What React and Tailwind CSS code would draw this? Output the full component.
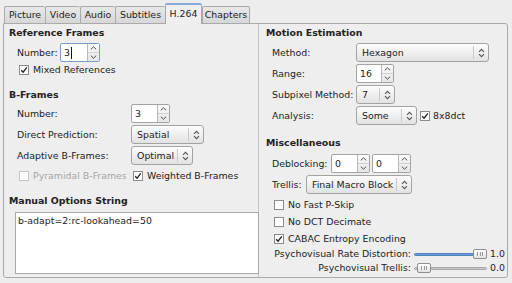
import React from "react";

const UpArrow = () => (
  <svg width="7" height="4" viewBox="0 0 7 4"><path d="M0.8 3.4L3.5 0.8L6.2 3.4" stroke="#4a4a4a" fill="none" strokeWidth="1" /></svg>
);
const DownArrow = () => (
  <svg width="7" height="4" viewBox="0 0 7 4"><path d="M0.8 0.6L3.5 3.2L6.2 0.6" stroke="#4a4a4a" fill="none" strokeWidth="1" /></svg>
);
const UpDown = () => (
  <svg width="7" height="10" viewBox="0 0 7 10">
    <path d="M1 3.8L3.5 1.3L6 3.8" stroke="#555" fill="none" strokeWidth="1.1" />
    <path d="M1 6.2L3.5 8.7L6 6.2" stroke="#555" fill="none" strokeWidth="1.1" />
  </svg>
);

function Spin({ value, className, focus, cursor }) {
  return (
    <div className={"flex h-[19px] rounded-[2px] border bg-white " + (focus ? "border-[#7d9dc9] " : "border-[#a3a3a3] ") + className}>
      <div className="flex flex-1 items-center pl-[3px]">
        <span>{value}</span>
        {cursor && <span className="ml-px h-[12px] w-px bg-[#111]" />}
      </div>
      <div className="flex w-[12px] flex-col border-l border-[#b8b8b8] bg-gradient-to-b from-[#fafafa] to-[#e6e6e6]">
        <div className="flex flex-1 items-center justify-center border-b border-[#d0d0d0]"><UpArrow /></div>
        <div className="flex flex-1 items-center justify-center"><DownArrow /></div>
      </div>
    </div>
  );
}

function Combo({ value, className }) {
  return (
    <div className={"flex h-[19px] items-center rounded-[3px] border border-[#a3a3a3] bg-gradient-to-b from-[#fdfdfd] to-[#e2e2e2] " + className}>
      <span className="flex-1 whitespace-nowrap pl-[5px]">{value}</span>
      <span className="h-[13px] w-px bg-[#c8c8c8]" />
      <span className="flex w-[14px] items-center justify-center"><UpDown /></span>
    </div>
  );
}

function Check({ checked, disabled }) {
  return (
    <span className={"flex h-[10px] w-[10px] shrink-0 items-center justify-center border bg-white " + (disabled ? "border-[#c6c6c6]" : "border-[#8c8c8c]")}>
      {checked && (
        <svg width="8" height="8" viewBox="0 0 8 8"><path d="M1.2 4.2L3.1 6.2L6.8 1.4" stroke="#222" fill="none" strokeWidth="1.3" /></svg>
      )}
    </span>
  );
}

function Slider({ filled, thumbClass }) {
  return (
    <div className="relative flex h-[14px] w-[73px] items-center">
      <div className={"h-[3px] w-full rounded-full border " + (filled ? "border-[#4f7fbd] bg-[#6f9fd8]" : "border-[#a8a8a8] bg-[#c9c9c9]")} />
      <div className={"absolute top-[2px] flex h-[10px] w-[14px] items-center justify-center gap-[1.5px] rounded-[2px] border border-[#8e8e8e] bg-gradient-to-b from-[#ffffff] to-[#e2e2e2] " + thumbClass}>
        <span className="h-[4px] w-px bg-[#9a9a9a]" />
        <span className="h-[4px] w-px bg-[#9a9a9a]" />
        <span className="h-[4px] w-px bg-[#9a9a9a]" />
      </div>
    </div>
  );
}

const Tab = ({ label, className }) => (
  <div className={"flex h-[17px] items-center justify-center rounded-t-[2px] border-l border-t border-[#aaaaaa] bg-gradient-to-b from-[#e8e8e8] to-[#d7d7d7] " + className}>
    {label}
  </div>
);

export default function App() {
  return (
    <div className="h-[283px] w-[512px] overflow-hidden bg-[#ededed] font-['DejaVu_Sans',sans-serif] text-[9.4px] leading-none text-[#222222]">
      <div className="flex h-[23px] items-end pl-[4px]">
        <Tab label="Picture" className="w-[41px]" />
        <Tab label="Video" className="w-[35px]" />
        <Tab label="Audio" className="w-[35px]" />
        <Tab label="Subtitles" className="w-[50px]" />
        <div className="relative z-10 -mb-px flex h-[21px] w-[37px] items-center justify-center rounded-t-[2px] border-x border-t-2 border-[#a8a8a8] border-t-[#88a8d6] bg-[#efefef] pb-[1px]">
          H.264
        </div>
        <Tab label="Chapters" className="w-[48px] border-r" />
      </div>
      <div className="ml-[3px] flex h-[255px] w-[505px] rounded-b-[3px] rounded-tr-[3px] border border-[#aaaaaa] bg-[#eeeeee]">
        {/* left column */}
        <div className="flex w-[255px] flex-col border-r border-[#c4c4c4] pt-[1px]">
          <div className="flex h-[16px] items-center pl-[5px] font-bold">Reference Frames</div>
          <div className="mt-[1px] flex h-[21px] items-center pl-[13px]">
            <span className="w-[43px]">Number:</span>
            <Spin value="3" className="w-[40px]" focus cursor />
          </div>
          <div className="flex h-[14px] items-center gap-[4px] pl-[15px]">
            <Check checked />
            <span>Mixed References</span>
          </div>
          <div className="mt-[10px] flex h-[16px] items-center pl-[5px] font-bold">B-Frames</div>
          <div className="flex h-[21px] items-center pl-[13px]">
            <span className="w-[114px]">Number:</span>
            <Spin value="3" className="w-[39px]" />
          </div>
          <div className="flex h-[21px] items-center pl-[13px]">
            <span className="w-[114px]">Direct Prediction:</span>
            <Combo value="Spatial" className="w-[73px]" />
          </div>
          <div className="flex h-[21px] items-center pl-[13px]">
            <span className="w-[114px]">Adaptive B-Frames:</span>
            <Combo value="Optimal" className="w-[62px]" />
          </div>
          <div className="flex h-[19px] items-center pl-[15px]">
            <div className="flex w-[114px] items-center gap-[4px] whitespace-nowrap text-[#a6a6a6]">
              <Check disabled />
              <span>Pyramidal B-Frames</span>
            </div>
            <div className="flex items-center gap-[4px] whitespace-nowrap">
              <Check checked />
              <span>Weighted B-Frames</span>
            </div>
          </div>
          <div className="mt-[8px] flex h-[16px] items-center pl-[5px] font-bold">Manual Options String</div>
          <div className="ml-[11px] mt-[3px] h-[62px] w-[244px] border border-[#a9a9a9] bg-white pl-[2px] pt-[3px]">
            b-adapt=2:rc-lookahead=50
          </div>
        </div>
        {/* right column */}
        <div className="flex flex-1 flex-col pt-[1px]">
          <div className="flex h-[16px] items-center pl-[7px] font-bold">Motion Estimation</div>
          <div className="mt-[1px] flex h-[21px] items-center pl-[13px]">
            <span className="w-[84px]">Method:</span>
            <Combo value="Hexagon" className="w-[133px]" />
          </div>
          <div className="flex h-[21px] items-center pl-[13px]">
            <span className="w-[84px]">Range:</span>
            <Spin value="16" className="w-[38px]" />
          </div>
          <div className="flex h-[21px] items-center pl-[13px]">
            <span className="w-[84px] whitespace-nowrap">Subpixel Method:</span>
            <Combo value="7" className="w-[39px]" />
          </div>
          <div className="flex h-[21px] items-center pl-[13px]">
            <span className="w-[84px]">Analysis:</span>
            <Combo value="Some" className="w-[61px]" />
            <span className="ml-[3px]"><Check checked /></span>
            <span className="ml-[3px]">8x8dct</span>
          </div>
          <div className="mt-[9px] flex h-[16px] items-center pl-[7px] font-bold">Miscellaneous</div>
          <div className="mt-[2px] flex h-[21px] items-center pl-[13px]">
            <span className="w-[59px]">Deblocking:</span>
            <Spin value="0" className="w-[39px]" />
            <Spin value="0" className="ml-[2px] w-[39px]" />
          </div>
          <div className="flex h-[21px] items-center pl-[13px]">
            <span className="w-[34px]">Trellis:</span>
            <Combo value="Final Macro Block" className="w-[106px]" />
          </div>
          <div className="mt-[1px] flex h-[17px] items-center gap-[4px] pl-[15px]">
            <Check />
            <span>No Fast P-Skip</span>
          </div>
          <div className="flex h-[17px] items-center gap-[4px] pl-[15px]">
            <Check />
            <span>No DCT Decimate</span>
          </div>
          <div className="flex h-[17px] items-center gap-[4px] pl-[15px]">
            <Check checked />
            <span>CABAC Entropy Encoding</span>
          </div>
          <div className="flex h-[14px] items-center pl-[13px]">
            <span className="w-[139px] whitespace-nowrap text-right">Psychovisual Rate Distortion:</span>
            <div className="ml-[3px]"><Slider filled thumbClass="left-[59px]" /></div>
            <span className="ml-[3px]">1.0</span>
          </div>
          <div className="flex h-[14px] items-center pl-[13px]">
            <span className="w-[139px] whitespace-nowrap text-right">Psychovisual Trellis:</span>
            <div className="ml-[3px]"><Slider thumbClass="left-[3px]" /></div>
            <span className="ml-[3px]">0.0</span>
          </div>
        </div>
      </div>
    </div>
  );
}
